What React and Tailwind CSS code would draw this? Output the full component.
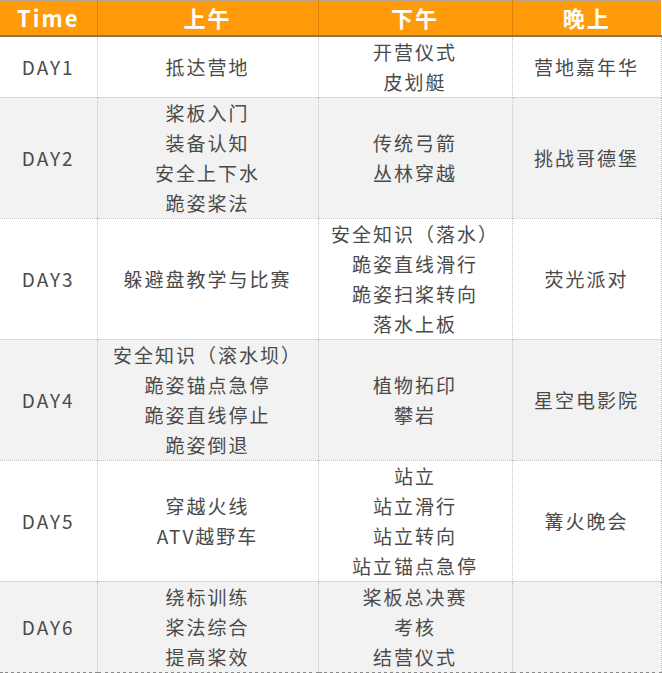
import React from "react";

const rows = [
  { day: "DAY1", am: ["抵达营地"], pm: ["开营仪式", "皮划艇"], night: ["营地嘉年华"], h: "h-[61px]" },
  { day: "DAY2", am: ["桨板入门", "装备认知", "安全上下水", "跪姿桨法"], pm: ["传统弓箭", "丛林穿越"], night: ["挑战哥德堡"], h: "h-[120px]" },
  { day: "DAY3", am: ["躲避盘教学与比赛"], pm: ["安全知识（落水）", "跪姿直线滑行", "跪姿扫桨转向", "落水上板"], night: ["荧光派对"], h: "h-[121px]" },
  { day: "DAY4", am: ["安全知识（滚水坝）", "跪姿锚点急停", "跪姿直线停止", "跪姿倒退"], pm: ["植物拓印", "攀岩"], night: ["星空电影院"], h: "h-[121px]" },
  { day: "DAY5", am: ["穿越火线", "ATV越野车"], pm: ["站立", "站立滑行", "站立转向", "站立锚点急停"], night: ["篝火晚会"], h: "h-[120px]" },
  { day: "DAY6", am: ["绕标训练", "桨法综合", "提高桨效"], pm: ["桨板总决赛", "考核", "结营仪式"], night: [], h: "h-[88px]" },
];

function Cell({ lines, last, bottom }) {
  return (
    <td
      className={`border-t border-dotted border-[#c4c4c4] text-center align-middle p-0 ${
        last ? "border-r border-r-[#b8b8b8]" : "border-r"
      } ${bottom ? "border-b-[3px] border-b-solid border-b-[#8a8a8a]" : ""}`}
    >
      {lines.map((l, i) => (
        <div key={i} className="leading-[30px]">
          {l}
        </div>
      ))}
    </td>
  );
}

export default function App() {
  return (
    <div
      className="w-[662px] h-[673px] bg-white overflow-hidden"
      style={{ fontFamily: '"Noto Sans CJK SC", "Noto Sans", sans-serif' }}
    >
      <table className="w-[661px] border-collapse table-fixed">
        <colgroup>
          <col className="w-[97px]" />
          <col className="w-[221px]" />
          <col className="w-[194px]" />
          <col className="w-[149px]" />
        </colgroup>
        <thead>
          <tr className="h-[35px] bg-[#ff9a0a] text-white text-[22px] font-bold tracking-[2px] border-t border-t-[#b5a48c] border-b-2 border-b-[#8f7650]">
            <th className="border-r border-[#e08500] font-bold">Time</th>
            <th className="border-r border-[#e08500] font-bold">上午</th>
            <th className="border-r border-[#e08500] font-bold">下午</th>
            <th className="font-bold">晚上</th>
          </tr>
        </thead>
        <tbody className="text-[#4a4a4a] text-[19px] tracking-[2px]">
          {rows.map((r, i) => {
            const bottom = i === rows.length - 1;
            return (
              <tr key={r.day} className={`${r.h} ${i % 2 === 1 ? "bg-[#f2f2f2]" : "bg-white"}`}>
                <Cell lines={[r.day]} bottom={bottom} />
                <Cell lines={r.am} bottom={bottom} />
                <Cell lines={r.pm} bottom={bottom} />
                <Cell lines={r.night} last bottom={bottom} />
              </tr>
            );
          })}
        </tbody>
      </table>
    </div>
  );
}
